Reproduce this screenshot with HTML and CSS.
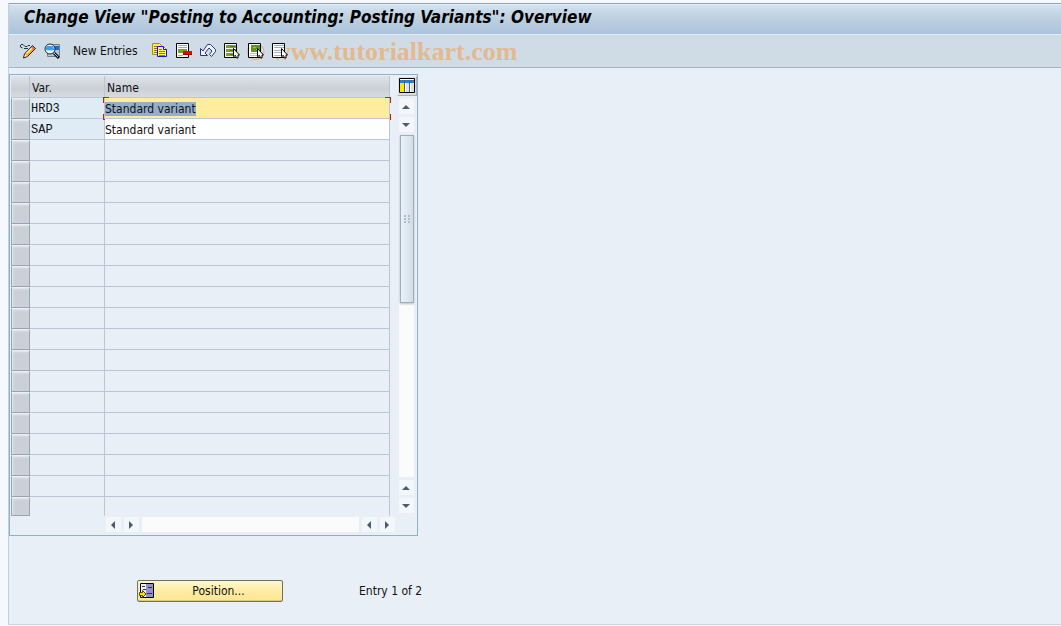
FILE: index.html
```
<!DOCTYPE html>
<html lang="en">
<head>
    <meta charset="UTF-8">
    <meta name="viewport" content="width=device-width, initial-scale=1.0">
    <title>Posting Variants: Overview</title>
    <link rel="stylesheet" href="styles.css">
</head>
<body>
    <div class="window">
        <h1 class="title">Change View "Posting to Accounting: Posting Variants": Overview</h1>

        <div class="toolbar">
            <button class="icon" aria-label="Display/Change">
                <svg viewBox="0 0 16 16">
                    <path d="M.5 2v2l2 1M1 1.500h2l2 2h2l1-1h2M4 5.500h4" fill="none" stroke="#26303c"/>
                    <path d="M12.500 2.500l3 3-8 8-4 1.500 1-4z" fill="#f9a51c" stroke="#2a1c10"/>
                    <path d="M12 4l1 1-6 6-1-1z" fill="#fff3b0"/>
                    <path d="M12.500 3l2.500 2.500-1.500 1.500-2.500-2.500z" fill="#e5688a"/>
                    <path d="M5 11l2 2-2.500 1z" fill="#fff"/>
                </svg>
            </button>
            <button class="icon" aria-label="Details">
                <svg viewBox="0 0 16 16">
                    <path d="M3.500 1.500h12v12h-12z" fill="#b4c4d4" stroke="#6d8099"/>
                    <path d="M10 3h5v4h-5z" fill="#1a6fc0"/>
                    <circle cx="6" cy="6" r="5" fill="#f5faff" stroke="#172336"/>
                    <path d="M3 3h6l1 3v1H2V5z" fill="#3d9df2"/>
                    <path d="M3 7h6v1H3z" fill="#a8dcff"/>
                    <path d="M10 10l5 5" stroke="#111" stroke-width="3"/>
                    <path d="M10 10l4 4" stroke="#a9c8e8"/>
                </svg>
            </button>
            <button class="text-button">New Entries</button>
            <button class="icon" aria-label="Copy As">
                <svg viewBox="0 0 16 16">
                    <path d="M.5.500h7l2 2v9h-9z" fill="#ffe94a" stroke="#a48e20"/>
                    <path d="M2 3.500h4M2 5.500h4M2 7.500h4M2 9.500h4" stroke="#8b7a20"/>
                    <path d="M5.500 3.500h6l3 3v7h-9z" fill="#fff25a" stroke="#1515d8"/>
                    <path d="M11.500 3.500v3h3" fill="#fff" stroke="#1515d8"/>
                    <path d="M7 6.500h3M7 8.500h6M7 10.500h6M7 12.500h6" stroke="#85854a"/>
                </svg>
            </button>
            <button class="icon" aria-label="Delete">
                <svg viewBox="0 0 16 16">
                    <path d="M.5.500h12v14h-12z" fill="#fff" stroke="#000"/>
                    <path d="M2 2.500h9M2 4.500h9M2 12.500h5" stroke="#9fa8cf"/>
                    <path d="M2 6h9v4H2z" fill="#75a51b"/>
                    <path d="M7 8h9v4H7z" fill="#e60012"/>
                    <path d="M7 11.500h9" stroke="#900010"/>
                </svg>
            </button>
            <button class="icon" aria-label="Undo Change">
                <svg viewBox="0 0 16 16">
                    <path d="M.5 5.500v7h7l-2.500-2.500 4-5 3 3-2.500 3.500 2 2 4-5v-2l-5-5h-3l-4.500 6.500z" fill="#edf4fc" stroke="#30318a"/>
                </svg>
            </button>
            <button class="icon" aria-label="Select All">
                <svg viewBox="0 0 16 16">
                    <path d="M.5.500h12v14h-12z" fill="#fff" stroke="#000"/>
                    <path d="M2 2h10v3H2zM2 6h10v3H2zM2 10h10v3H2z" fill="#79a71b"/>
                    <path d="M6 3.500h5M6 7.500h5M6 11.500h5" stroke="#4f7612"/>
                    <path d="M9.500 5.500v8l2-1 1 2.500h1.500v-3h1.500z" fill="#fff" stroke="#000"/>
                </svg>
            </button>
            <button class="icon" aria-label="Select Block">
                <svg viewBox="0 0 16 16">
                    <path d="M.5.500h12v14h-12z" fill="#fff" stroke="#000"/>
                    <path d="M3 2h9v7H3z" fill="#66951d"/>
                    <path d="M5 4.500h3M8 6.500h3" stroke="#9ec23e"/>
                    <path d="M2 10.500h8M2 12.500h7" stroke="#b9c2c7"/>
                    <path d="M9.500 5.500v8l2-1 1 2.500h1.500v-3h1.500z" fill="#fff" stroke="#000"/>
                </svg>
            </button>
            <button class="icon" aria-label="Deselect All">
                <svg viewBox="0 0 16 16">
                    <path d="M.5.500h12v14h-12z" fill="#fff" stroke="#000"/>
                    <path d="M2 2.500h10M2 4.500h10M2 7.500h10M2 9.500h8M2 12.500h7" stroke="#9eb3c8"/>
                    <path d="M9.500 5.500v8l2-1 1 2.500h1.500v-3h1.500z" fill="#fff" stroke="#000"/>
                </svg>
            </button>
            <span class="watermark">© www.tutorialkart.com</span>
        </div>

        <div class="content">
            <div class="table-control">
                <table class="grid">
                    <thead>
                        <tr><th class="sel"></th><th class="var">Var.</th><th>Name</th></tr>
                    </thead>
                    <tbody id="rows">
                        <tr>
                            <td class="sel"></td>
                            <td class="key">HRD3</td>
                            <td class="name active"><input type="text" id="first" aria-label="Name HRD3" value="Standard variant"></td>
                        </tr>
                        <tr>
                            <td class="sel"></td>
                            <td class="key">SAP</td>
                            <td class="name"><input type="text" aria-label="Name SAP" value="Standard variant"></td>
                        </tr>
                    </tbody>
                </table>

                <div class="side">
                    <button class="config" aria-label="Configuration">
                        <svg viewBox="0 0 16 16">
                            <path d="M.5.500h15v14h-15z" fill="#fff" stroke="#000"/>
                            <path d="M1 2h14v3H1z" fill="#2a7bd0"/>
                            <path d="M1 5h4v9H1z" fill="#ffe800"/>
                            <path d="M7 5h3v9H7zM12 5h3v9h-3z" fill="#dde1e6"/>
                            <path d="M5.500 2v12M10.500 2v12" stroke="#55606c"/>
                        </svg>
                    </button>
                    <div class="vscroll">
                        <button class="arrow" aria-label="First"><i class="up"></i></button>
                        <button class="arrow" aria-label="Up"><i class="down"></i></button>
                        <div class="thumb"><span class="grip"></span></div>
                        <div class="track"></div>
                        <button class="arrow" aria-label="Previous"><i class="up"></i></button>
                        <button class="arrow" aria-label="Next"><i class="down"></i></button>
                    </div>
                </div>

                <div class="hscroll">
                    <button class="arrow" aria-label="Left"><i class="left"></i></button>
                    <button class="arrow" aria-label="Right"><i class="right"></i></button>
                    <div class="track"></div>
                    <button class="arrow" aria-label="Page left"><i class="left"></i></button>
                    <button class="arrow" aria-label="Page right"><i class="right"></i></button>
                </div>
            </div>

            <div class="footer">
                <button class="position">
                    <svg viewBox="0 0 16 16">
                        <path d="M1.500.500h13v14h-13z" fill="#eef0fa" stroke="#000"/>
                        <path d="M7 1h7v13H7z" fill="#9292c8"/>
                        <path d="M3 3.500h3M4 6.500h3M9 4.500h4M8 10.500h5" stroke="#333"/>
                        <path d="M.5 9.500h3v-2l3.500 3.500-3.500 3.500v-2h-3z" fill="#ffe600" stroke="#554400"/>
                    </svg>
                    <span>Position...</span>
                </button>
                <span>Entry 1 of 2</span>
            </div>
        </div>
    </div>

    <script>
        const rows = document.getElementById("rows");
        for (let i = 0; i < 18; i++) {
            const tr = document.createElement("tr");
            tr.innerHTML = '<td class="sel"></td><td></td><td></td>';
            rows.appendChild(tr);
        }
        const first = document.getElementById("first");
        first.focus();
        first.select();
    </script>
</body>
</html>
```
FILE: styles.css
```
* {
    box-sizing: border-box;
}
body {
    margin: 0;
    padding: 3px 0 1px 8px;
    min-height: 100vh;
    display: flex;
    background: #f5f8fc;
    color: #111;
    font-family: "DejaVu Sans Condensed", "DejaVu Sans", sans-serif;
    font-stretch: condensed;
    font-size: 12px;
    line-height: 16px;
}
button {
    margin: 0;
    padding: 0;
    border: none;
    background: none;
    color: inherit;
    font: inherit;
    cursor: pointer;
}
svg {
    display: block;
    width: 16px;
    height: 16px;
}
.window {
    flex: 1;
    display: flex;
    flex-direction: column;
    border-left: 1px solid #c3cfdd;
    border-bottom: 1px solid #cdd5e3;
    background: #e8eff6;
}
.title {
    margin: 0;
    height: 32px;
    padding: 0 15px;
    border-top: 1px solid #929eb4;
    border-bottom: 1px solid #e5edf6;
    background: linear-gradient(#d3e2ef, #bdd0df 50%, #abc3dd);
    box-shadow: inset 0 1px #e8f0f7;
    font-size: 17px;
    font-style: italic;
    line-height: 26px;
    color: #000;
    white-space: nowrap;
}
.toolbar {
    position: relative;
    display: flex;
    align-items: center;
    gap: 8px;
    height: 33px;
    padding: 0 11px;
    border-bottom: 1px solid #a4b5c6;
    background: #cfdce6;
}
.toolbar button {
    position: relative;
    z-index: 1;
}
.text-button {
    margin: 0 6px 0 5px;
    white-space: nowrap;
}
.watermark {
    position: absolute;
    left: 237px;
    top: 0;
    color: #e3b98f;
    font: bold 26px/33px "Liberation Serif", serif;
    white-space: nowrap;
}
.content {
    flex: 1;
    padding-top: 6px;
}
.table-control {
    display: grid;
    grid-template-columns: 379px 20px;
    column-gap: 7px;
    width: 409px;
    padding: 1px 0 3px 1px;
    border: 1px solid #8eb0cb;
}
.grid {
    width: 379px;
    table-layout: fixed;
    border-collapse: separate;
    border-spacing: 0;
}
.grid th, .grid td {
    height: 21px;
    padding: 0;
    border-right: 1px solid #bbc5d5;
    border-bottom: 1px solid #bbc5d5;
    text-align: left;
    line-height: 16px;
}
.grid th {
    height: 22px;
    padding: 2px 0 0 2px;
    background: linear-gradient(#dfe3e7, #cbd0d6 60%, #d8dbe0);
    font-weight: normal;
}
.grid th.sel {
    width: 19px;
}
.grid th.var {
    width: 75px;
}
.grid td.sel {
    border: 1px solid #98a2b0;
    border-top-color: #edf0f3;
    background: #cbd0d8;
    box-shadow: inset 1px 1px 2px #e8ebef;
}
.grid tr:last-child td {
    height: 19px;
    border-bottom-color: transparent;
}
.grid tr:last-child td.sel {
    border-bottom-color: #98a2b0;
}
.grid thead tr:last-child th {
    border-bottom-color: #bbc5d5;
}
.grid .key {
    padding: 2px 0 0 1px;
    background: #dfebf5;
    font-family: "Liberation Mono", monospace;
}
.name {
    position: relative;
    background: #fff;
}
.name input {
    display: block;
    width: 100%;
    height: 20px;
    padding: 2px 0 0;
    border: none;
    outline: none;
    background: none;
    color: inherit;
    font: inherit;
}
.name input::selection {
    background: #95aeca;
    color: #111;
}
.grid .name.active {
    background: #ffec9c;
}
/* red corners of the focused cell */
.name.active::after {
    content: "";
    position: absolute;
    inset: -1px -2px -2px;
    pointer-events: none;
    --red: linear-gradient(#e01020, #e01020);
    background:
        var(--red) 0 0 / 6px 1px, var(--red) 0 0 / 1px 6px,
        var(--red) 100% 0 / 6px 1px, var(--red) 100% 0 / 1px 6px,
        var(--red) 0 100% / 6px 1px, var(--red) 0 100% / 1px 6px,
        var(--red) 100% 100% / 6px 1px, var(--red) 100% 100% / 1px 6px;
    background-repeat: no-repeat;
}
.side {
    display: flex;
    flex-direction: column;
    gap: 3px;
}
.config {
    width: 20px;
    height: 20px;
    padding: 1px;
    border: 1px solid #aab2bc;
    border-top-color: #eef1f4;
    border-left-color: #eef1f4;
    background: #d8dde3;
}
.vscroll {
    flex: 1;
    display: flex;
    flex-direction: column;
    gap: 3px;
    width: 15px;
    margin: 0 0 3px 2px;
}
.arrow {
    flex: none;
    display: flex;
    align-items: center;
    justify-content: center;
    width: 15px;
    height: 15px;
    padding-right: 1px;
    background: #f3f7fb;
}
.arrow i {
    border: 4px solid transparent;
}
.arrow .up {
    border-top-width: 0;
    border-bottom-color: #4b5c6b;
}
.arrow .down {
    border-bottom-width: 0;
    border-top-color: #4b5c6b;
}
.arrow .left {
    border-left-width: 0;
    border-right-color: #4b5c6b;
}
.arrow .right {
    border-right-width: 0;
    border-left-color: #4b5c6b;
}
.track {
    flex: 1;
    background: #fbfbfb;
}
.thumb {
    display: flex;
    align-items: center;
    justify-content: center;
    height: 168px;
    margin: 0 0 -3px 1px;
    border: 1px solid #9bafbd;
    background: linear-gradient(90deg, #e9f1f7, #dfe9f2 50%, #cfdde8);
    box-shadow: 0 1px 2px #b5bdc5;
    z-index: 1;
}
.grip {
    width: 6px;
    height: 8px;
    background: repeating-linear-gradient(#aebccb 0 2px, transparent 2px 3px);
    mask: linear-gradient(90deg, #000 2px, transparent 2px 4px, #000 4px);
}
.hscroll {
    grid-column: 1 / -1;
    display: flex;
    gap: 3px;
    width: 289px;
    margin: 1px 0 0 95px;
}
.footer {
    display: flex;
    align-items: center;
    gap: 76px;
    margin: 44px 0 0 128px;
}
.position {
    display: flex;
    align-items: center;
    width: 146px;
    height: 22px;
    padding-left: 1px;
    border: 1px solid #6f7063;
    border-radius: 2px;
    background: linear-gradient(#fff7ce, #ffeca2 50%, #fbe692);
    box-shadow: inset 0 -1px #dac780;
}
.position span {
    flex: 1;
}
```
